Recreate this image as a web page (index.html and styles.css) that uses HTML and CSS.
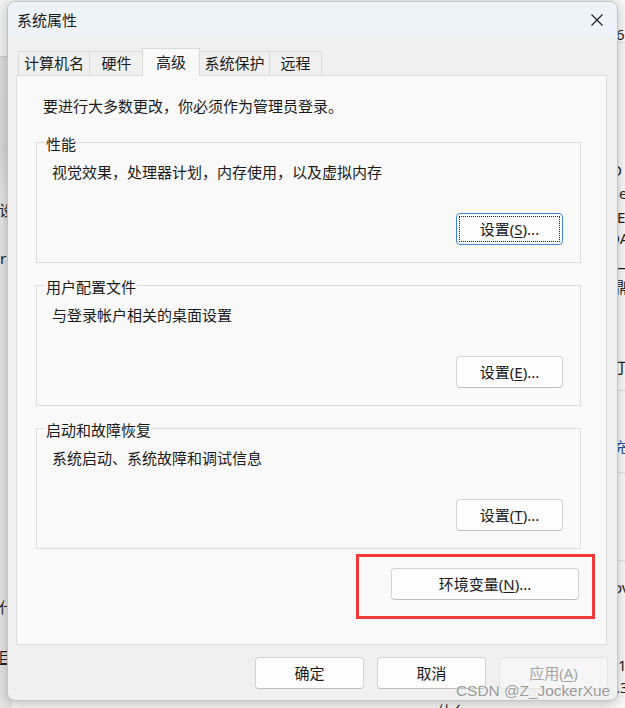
FILE: index.html
```html
<!DOCTYPE html>
<html lang="zh-CN">
<head>
<meta charset="utf-8">
<title>系统属性</title>
<link rel="stylesheet" href="styles.css">
</head>
<body>
<div class="desk">
  <div class="bg-left"></div>
  <div class="bg-right">
    <div class="rl rl1"></div>
    <div class="rl rl2"></div>
    <div class="rl rl3"></div>
    <div class="rl rl4"></div>
  </div>
  <span class="frag l1">设</span>
  <span class="frag l2">r</span>
  <span class="frag l3">什</span>
  <span class="frag l4">目</span>
  <span class="frag r1">6</span>
  <span class="frag r2">D</span>
  <span class="frag r3">Ge</span>
  <span class="frag r4">E</span>
  <span class="frag r5">DA</span>
  <span class="frag r6">—</span>
  <span class="frag r7">鼎</span>
  <span class="frag r8">丁</span>
  <span class="frag r9">充</span>
  <span class="frag r10">ov</span>
  <span class="frag r11">1,</span>
  <span class="frag r12">.3</span>
  <span class="frag b1">什么</span>
</div>

<div class="window">
  <div class="titlebar">
    <span class="title">系统属性</span>
    <svg class="close" width="12" height="12" viewBox="0 0 12 12" aria-hidden="true">
      <path d="M0.5 0.5 L11.5 11.5 M11.5 0.5 L0.5 11.5" stroke="#1a1a1a" stroke-width="1.1" fill="none"/>
    </svg>
  </div>

  <div class="tabs">
    <div class="tab t1">计算机名</div>
    <div class="tab t2">硬件</div>
    <div class="tab sel">高级</div>
    <div class="tab t4">系统保护</div>
    <div class="tab t5">远程</div>
  </div>

  <div class="panel">
    <p class="notice">要进行大多数更改，你必须作为管理员登录。</p>
    <div class="groups">
      <section class="group">
        <span class="legend">性能</span>
        <p class="desc">视觉效果，处理器计划，内存使用，以及虚拟内存</p>
        <div class="btnrow"><button class="btn set focus">设置(<u>S</u>)...</button></div>
      </section>
      <section class="group">
        <span class="legend">用户配置文件</span>
        <p class="desc">与登录帐户相关的桌面设置</p>
        <div class="btnrow"><button class="btn set">设置(<u>E</u>)...</button></div>
      </section>
      <section class="group">
        <span class="legend">启动和故障恢复</span>
        <p class="desc">系统启动、系统故障和调试信息</p>
        <div class="btnrow"><button class="btn set">设置(<u>T</u>)...</button></div>
      </section>
    </div>
    <div class="envrow"><button class="btn env">环境变量(<u>N</u>)...</button></div>
    <div class="redbox"></div>
  </div>

  <div class="footer">
    <button class="btn act">确定</button>
    <button class="btn act">取消</button>
    <button class="btn act disabled">应用(<u>A</u>)</button>
  </div>
</div>

<div class="watermark">CSDN @Z_JockerXue</div>
</body>
</html>
```

FILE: styles.css
```css
html, body {
  margin: 0;
  padding: 0;
}

body {
  width: 625px;
  height: 708px;
  position: relative;
  overflow: hidden;
  background: #f4f4f4;
  font-family: "Noto Sans", "Noto Sans CJK SC", sans-serif;
  color: #1a1a1a;
}

/* background page behind the dialog */
.desk {
  position: absolute;
  inset: 0;
}

.bg-left {
  position: absolute;
  left: 0;
  top: 0;
  width: 12px;
  height: 708px;
  background: linear-gradient(to bottom, #f1f1f1 0, #f1f1f1 56px, #c9c9c9 56px, #c9c9c9 57px, #dadada 57px, #d6d6d6 150px, #e2e2e2 190px, #e2e2e2 100%);
}

.bg-right {
  position: absolute;
  left: 610px;
  top: 0;
  width: 15px;
  height: 708px;
  background: #f7f7f7;
}

.rl {
  position: absolute;
  left: 0;
  right: 0;
  height: 1px;
  background: #dedede;
}
.rl1 { top: 42px; }
.rl2 { top: 390px; }
.rl3 { top: 472px; }
.rl4 { top: 560px; }

.frag {
  position: absolute;
  font-size: 15px;
  line-height: 20px;
  color: #222222;
  white-space: nowrap;
}
.l1 { left: -1px; top: 200px; }
.l2 { left: 0; top: 248px; }
.l3 { left: -1px; top: 597px; }
.l4 { left: -2px; top: 647px; text-decoration: underline; }
.r1 { left: 616px; top: 24px; }
.r2 { left: 611px; top: 160px; }
.r3 { left: 608px; top: 183px; }
.r4 { left: 617px; top: 207px; }
.r5 { left: 609px; top: 228px; }
.r6 { left: 616px; top: 257px; }
.r7 { left: 612px; top: 277px; }
.r8 { left: 614px; top: 357px; }
.r9 { left: 613px; top: 437px; color: #1f4f9c; }
.r10 { left: 613px; top: 577px; }
.r11 { left: 618px; top: 655px; }
.r12 { left: 616px; top: 677px; }
.b1 { left: 437px; top: 701px; }

/* dialog window */
.window {
  position: absolute;
  left: 7px;
  top: 1px;
  width: 611px;
  height: 700px;
  box-sizing: border-box;
  border: 1px solid #c4c4c4;
  border-radius: 8px;
  background: #f0f0f0;
  box-shadow: 0 2px 12px rgba(0, 0, 0, 0.22);
  overflow: hidden;
  display: flex;
  flex-direction: column;
}

.titlebar {
  height: 35px;
  flex: none;
  background: #eef3f9;
  display: flex;
  align-items: center;
  justify-content: space-between;
  padding: 0 14px 0 9px;
}

.title {
  font-size: 15px;
  line-height: 20px;
  color: #1a1a1a;
}

.close {
  display: block;
}

/* tabs */
.tabs {
  position: relative;
  z-index: 1;
  height: 27px;
  flex: none;
  margin-top: 11px;
  padding-left: 10px;
  display: flex;
  align-items: flex-end;
}

.tab {
  box-sizing: border-box;
  height: 24px;
  border: 1px solid #d9d9d9;
  border-bottom: none;
  background: #f0f0f0;
  font-size: 15px;
  line-height: 22px;
  text-align: center;
  margin-right: -1px;
  white-space: nowrap;
}
.t1 { width: 72px; }
.t2 { width: 55px; }
.t4 { width: 71px; }
.t5 { width: 53px; }

.tab.sel {
  width: 58px;
  height: 28px;
  margin-left: -1px;
  margin-bottom: -1px;
  padding-top: 2px;
  background: #f9f9f9;
  position: relative;
}

/* panel */
.panel {
  position: relative;
  flex: none;
  height: 570px;
  box-sizing: border-box;
  margin: 0 10px 0 8px;
  border: 1px solid #dcdcdc;
  background: #f9f9f9;
  padding: 20px 0 0 19px;
}

.notice {
  margin: 0 0 0 7px;
  font-size: 15px;
  line-height: 20px;
}

.groups {
  margin-top: 26px;
  display: flex;
  flex-direction: column;
  gap: 22px;
}

.group {
  width: 545px;
  height: 121px;
  box-sizing: border-box;
  border: 1px solid #dcdcdc;
  display: flex;
  flex-direction: column;
}

.legend {
  align-self: flex-start;
  margin: -9px 0 0 8px;
  padding: 0 1px;
  background: #f9f9f9;
  font-size: 15px;
  line-height: 20px;
}

.desc {
  margin: 8px 0 0 15px;
  font-size: 15px;
  line-height: 20px;
}

.btnrow {
  margin-top: auto;
  display: flex;
  justify-content: flex-end;
  padding: 0 17px 17px 0;
}

/* buttons */
.btn {
  box-sizing: border-box;
  height: 32px;
  padding: 0;
  border: 1px solid #d3d3d3;
  border-bottom-color: #bfbfbf;
  border-radius: 4px;
  background: #fdfdfd;
  font-family: "Noto Sans", "Noto Sans CJK SC", sans-serif;
  font-size: 15px;
  line-height: 28px;
  color: #1a1a1a;
  text-align: center;
}

.btn u {
  text-underline-offset: 2px;
}

.set {
  width: 107px;
}

.focus {
  border-color: #3f86d4;
  outline: 1px dotted #222;
  outline-offset: -4px;
}

.envrow {
  margin-top: 19px;
  margin-right: 27px;
  display: flex;
  justify-content: flex-end;
}

.env {
  width: 188px;
}

.redbox {
  position: absolute;
  left: 339px;
  top: 478px;
  width: 239px;
  height: 65px;
  box-sizing: border-box;
  border: 3px solid #f03a3a;
}

/* footer */
.footer {
  flex: none;
  display: flex;
  justify-content: flex-end;
  gap: 13px;
  padding: 12px 9px 0 0;
}

.act {
  width: 109px;
}

.disabled {
  background: #f6f6f6;
  border-color: #e3e3e3;
  color: #a5a5a5;
}

.watermark {
  position: absolute;
  left: 456px;
  top: 681px;
  z-index: 5;
  font-family: "Liberation Sans", Arial, sans-serif;
  font-size: 15.4px;
  line-height: 20px;
  color: rgba(135, 135, 135, 0.85);
  text-shadow: 0 0 2px #ffffff;
  white-space: nowrap;
}
```
